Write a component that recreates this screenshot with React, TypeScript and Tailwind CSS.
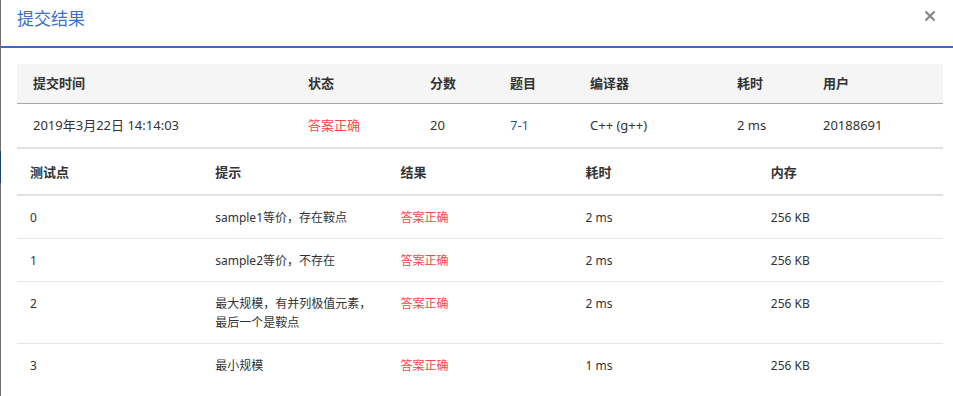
import React from "react";

const font = { fontFamily: '"Noto Sans", "Noto Sans CJK SC", sans-serif' };

const red = "text-[#f5484a]";

function CloseIcon() {
  return (
    <svg width="12" height="12" viewBox="0 0 12 12" className="block">
      <path d="M1.5 1.5 L10.5 10.5 M10.5 1.5 L1.5 10.5" stroke="#8a8a8a" strokeWidth="2.4" strokeLinecap="butt" />
    </svg>
  );
}

const cases = [
  { id: "0", hint: ["sample1等价，存在鞍点"], time: "2 ms" },
  { id: "1", hint: ["sample2等价，不存在"], time: "2 ms" },
  { id: "2", hint: ["最大规模，有并列极值元素，", "最后一个是鞍点"], time: "2 ms" },
  { id: "3", hint: ["最小规模"], time: "1 ms" },
];

export default function App() {
  return (
    <div className="relative w-[953px] h-[396px] bg-white border-l border-[#6e6e6e] text-[#333]" style={font}>
      <div className="absolute left-[-1px] top-[151px] w-[1px] h-[32px] bg-[#1b3f73]" />
      <div className="flex items-center justify-between h-[48px] border-b-2 border-[#3a6bc4] pl-[16px] pr-[17px]">
        <span className="text-[17px] leading-[24px] text-[#3d6fcb] mt-[-9px]">提交结果</span>
        <span className="mt-[-15px]"><CloseIcon /></span>
      </div>

      <div className="mx-[16px] mt-[16px] w-[926px]">
        <div className="grid grid-cols-[275px_122px_80px_80px_147px_86px_136px] h-[40px] items-center bg-[#f5f5f5] border-b border-[#a9a9a9] text-[13px] font-bold leading-[19px]">
          <div className="pl-[16px]">提交时间</div>
          <div className="pl-[16px]">状态</div>
          <div className="pl-[16px]">分数</div>
          <div className="pl-[16px]">题目</div>
          <div className="pl-[16px]">编译器</div>
          <div className="pl-[16px]">耗时</div>
          <div className="pl-[16px]">用户</div>
        </div>
        <div className="grid grid-cols-[275px_122px_80px_80px_147px_86px_136px] h-[45px] items-center border-b-2 border-[#e1e2e5] text-[13px] leading-[19px]">
          <div className="pl-[16px]">2019年3月22日 14:14:03</div>
          <div className={`pl-[16px] ${red}`}>答案正确</div>
          <div className="pl-[16px]">20</div>
          <div className="pl-[16px] text-[#1f56a8]">7-1</div>
          <div className="pl-[16px]">C++ (g++)</div>
          <div className="pl-[16px]">2 ms</div>
          <div className="pl-[16px]">20188691</div>
        </div>

        <div className="grid grid-cols-5 pt-[14px] pb-[12px] border-b-2 border-[#e1e2e5] text-[13px] font-bold leading-[19px]">
          <div className="pl-[13px]">测试点</div>
          <div className="pl-[13px]">提示</div>
          <div className="pl-[13px]">结果</div>
          <div className="pl-[13px]">耗时</div>
          <div className="pl-[13px]">内存</div>
        </div>
        {cases.map((c, i) => (
          <div
            key={c.id}
            className={`grid grid-cols-5 pt-[12px] pb-[11px] text-[12px] leading-[19px] ${i < cases.length - 1 ? "border-b border-[#e4e5e8]" : ""}`}
          >
            <div className="pl-[13px]">{c.id}</div>
            <div className="pl-[13px]">
              {c.hint.map((h) => (
                <div key={h}>{h}</div>
              ))}
            </div>
            <div className={`pl-[13px] ${red}`}>答案正确</div>
            <div className="pl-[13px]">{c.time}</div>
            <div className="pl-[13px]">256 KB</div>
          </div>
        ))}
      </div>
    </div>
  );
}
